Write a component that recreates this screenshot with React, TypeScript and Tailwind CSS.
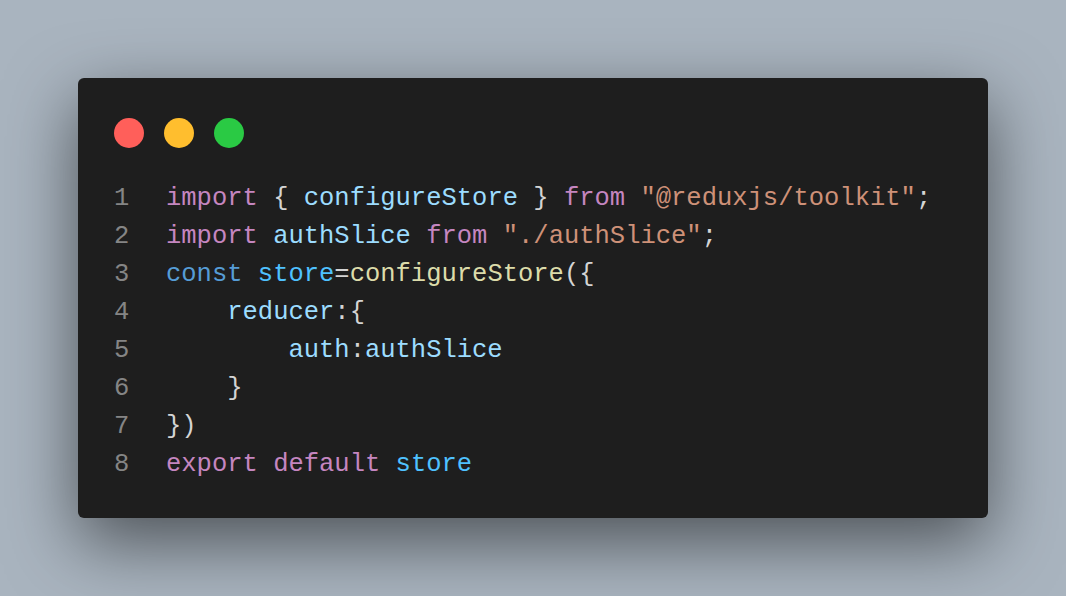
const K = 'text-[#c586c0]';
const V = 'text-[#9cdcfe]';
const S = 'text-[#ce9178]';
const D = 'text-[#569cd6]';
const F = 'text-[#dcdcaa]';
const C = 'text-[#4fc1ff]';
const P = 'text-[#d4d4d4]';

type Tok = [string, string];

const lines: Tok[][] = [
  [[K, 'import'], [P, ' { '], [V, 'configureStore'], [P, ' } '], [K, 'from'], [P, ' '], [S, '"@reduxjs/toolkit"'], [P, ';']],
  [[K, 'import'], [P, ' '], [V, 'authSlice'], [P, ' '], [K, 'from'], [P, ' '], [S, '"./authSlice"'], [P, ';']],
  [[D, 'const'], [P, ' '], [C, 'store'], [P, '='], [F, 'configureStore'], [P, '({']],
  [[P, '    '], [V, 'reducer'], [P, ':{']],
  [[P, '        '], [V, 'auth'], [P, ':'], [V, 'authSlice']],
  [[P, '    }']],
  [[P, '})']],
  [[K, 'export'], [P, ' '], [K, 'default'], [P, ' '], [C, 'store']],
];

export default function App() {
  return (
    <div className="w-[1066px] h-[596px] p-[78px] bg-[#a9b4bf]">
      <div className="h-full rounded-md bg-[#1e1e1e] pt-10 pl-9 shadow-[0_24px_70px_rgba(0,0,0,0.55)]">
        <div className="flex gap-5">
          <span className="w-[30px] h-[30px] rounded-full bg-[#ff5f5a]" />
          <span className="w-[30px] h-[30px] rounded-full bg-[#ffbe2e]" />
          <span className="w-[30px] h-[30px] rounded-full bg-[#2aca44]" />
        </div>
        <div className="mt-[32px] font-['Liberation_Mono',monospace] text-[25.5px] leading-[38px]">
          {lines.map((line, i) => (
            <div key={i} className="flex whitespace-pre">
              <span className="w-[15px] text-right text-[#858585]">{i + 1}</span>
              <span className="ml-[37px]">
                {line.map(([cls, txt], j) => (
                  <span key={j} className={cls}>{txt}</span>
                ))}
              </span>
            </div>
          ))}
        </div>
      </div>
    </div>
  );
}
